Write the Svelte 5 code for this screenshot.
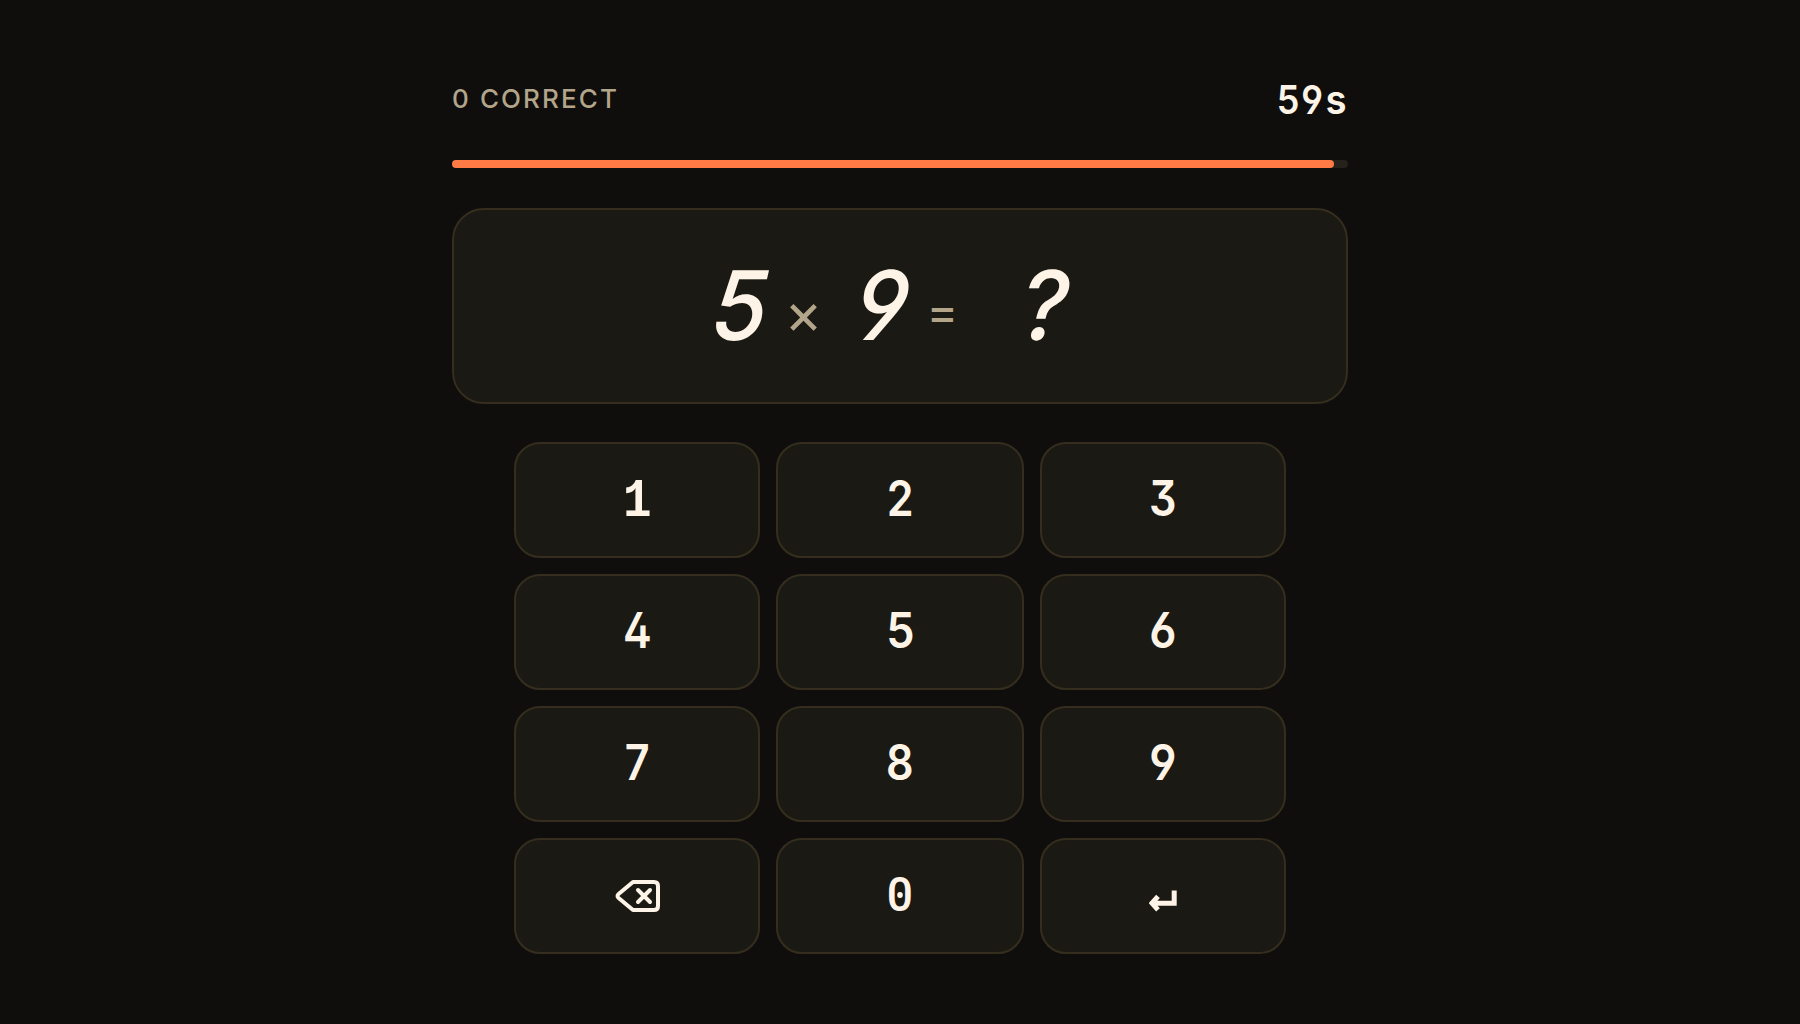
<script>
  const correct = 0;
  const secondsLeft = 59;
  const progress = 98.44;
  const keys = ['1', '2', '3', '4', '5', '6', '7', '8', '9', 'back', '0', 'enter'];
</script>

<main>
  <header>
    <span class="score">{correct} CORRECT</span>
    <span class="timer"><i>{Math.floor(secondsLeft / 10)}</i><i>{secondsLeft % 10}</i><i class="unit">s</i></span>
  </header>

  <div class="track"><div class="fill" style="width: {progress}%"></div></div>

  <section class="problem">
    <span class="num">5</span>
    <span class="op times">×</span>
    <span class="num">9</span>
    <span class="op equals">=</span>
    <span class="num answer">?</span>
  </section>

  <div class="pad">
    {#each keys as key}
      <button aria-label={key}>
        {#if key === 'back'}
          <svg class="back" viewBox="0 0 48 48" fill="none" stroke="currentColor" stroke-width="4" stroke-linecap="round" stroke-linejoin="round">
            <path d="M20 10H41Q45 10 45 14V34Q45 38 41 38H20L5.600 26Q3.400 24 5.600 22Z" />
            <path d="m25 18 12 12M37 18 25 30" />
          </svg>
        {:else if key === 'enter'}
          <svg class="enter" viewBox="0 0 28 22" fill="none" stroke="currentColor" stroke-width="5">
            <path d="M25.200 0.600V13.200H4M9 6.400 3 13.200l6 6.700" />
          </svg>
        {:else}
          <span class="digit d{key}">{key}</span>
        {/if}
      </button>
    {/each}
  </div>
</main>

<style>
  :global(body) {
    margin: 0;
    background: #0f0e0c;
  }
  main {
    box-sizing: border-box;
    width: 896px;
    height: 1024px;
    margin: 0 auto;
    padding-top: 72px;
    color: #fdf4e7;
    font-family: Inter, sans-serif;
  }
  header {
    display: flex;
    justify-content: space-between;
    align-items: center;
    height: 54px;
    margin-bottom: 34px;
  }
  .score {
    margin-top: -2px;
    color: #b3a58a;
    font-size: 26px;
    font-weight: 530;
    letter-spacing: 2.100px;
  }
  .timer {
    display: flex;
    font-size: 40px;
    font-weight: 600;
    font-feature-settings: 'cv04', 'cv03';
  }
  .timer i {
    width: 24px;
    font-style: normal;
    display: flex;
    justify-content: center;
    transform: scaleX(0.900);
  }
  .timer .unit {
    transform: scaleX(0.960);
  }
  .track {
    height: 8px;
    border-radius: 4px;
    background: #25211b;
  }
  .fill {
    height: 8px;
    border-radius: 4px;
    background: #ff7a45;
  }
  .problem {
    box-sizing: border-box;
    display: flex;
    justify-content: center;
    align-items: center;
    height: 196px;
    margin-top: 40px;
    border: 2px solid #352e1e;
    border-radius: 32px;
    background: #1a1913;
  }
  .num {
    display: flex;
    justify-content: center;
    width: 58px;
    padding-bottom: 2px;
    font-size: 96px;
    line-height: 116px;
    font-weight: 520;
    font-style: italic;
    font-feature-settings: 'cv04', 'cv03';
    transform: translateX(-2px) scaleX(0.940) skewX(-4deg);
  }
  .op {
    display: flex;
    justify-content: center;
    width: 34px;
    padding-top: 13px;
    color: #b3a58a;
    font-size: 48px;
    line-height: 56px;
  }
  .times {
    margin: 0 34px 0 16px;
    font-size: 58px;
  }
  .equals {
    margin: 0 13px;
    padding-top: 11px;
  }
  .answer {
    width: 115px;
    transform: translateX(14px) scaleX(0.950) skewX(-3deg);
  }
  .pad {
    display: grid;
    grid-template-columns: 246px 248px 246px;
    grid-auto-rows: 116px;
    gap: 16px;
    width: 772px;
    margin: 38px auto 0;
  }
  button {
    display: flex;
    justify-content: center;
    align-items: center;
    padding: 0;
    border: 2px solid #352e1e;
    border-radius: 26px;
    background: #1a1913;
    color: inherit;
    font: 600 49px / 58px Inter, sans-serif;
    font-feature-settings: 'cv02', 'cv03', 'cv04', 'cv09';
  }
  .digit {
    position: relative;
    padding-bottom: 2px;
    transform: scaleX(0.880);
  }
  .d5,
  .d6,
  .d9 {
    transform: scaleX(0.920);
  }
  .d1 {
    padding: 3px 0 0;
    font-family: 'Liberation Mono', monospace;
    font-size: 54px;
  }
  .d0 {
    font-family: Roboto, sans-serif;
    font-weight: 500;
    transform: scaleX(0.940);
  }
  .d0::after {
    content: '';
    position: absolute;
    left: calc(50% - 3px);
    top: calc(50% - 4px);
    width: 6px;
    height: 6px;
    border-radius: 50%;
    background: currentColor;
  }
  .back {
    width: 48px;
    height: 48px;
  }
  .enter {
    width: 28px;
    height: 22px;
    margin-top: 10px;
  }
</style>
